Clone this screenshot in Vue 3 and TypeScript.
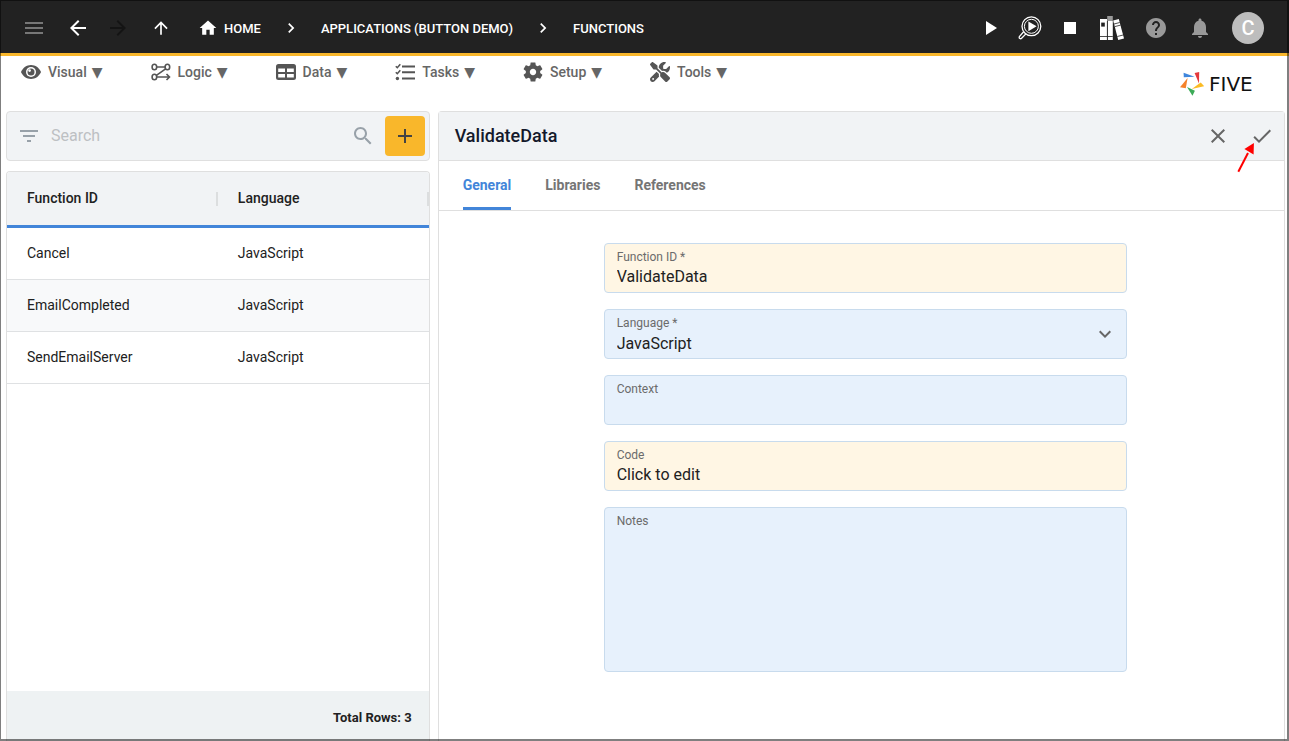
<script setup lang="ts">
import { ref } from 'vue'

interface FunctionRow {
  id: string
  language: string
}

const menus = ['Visual', 'Logic', 'Data', 'Tasks', 'Setup', 'Tools']
const crumbs = ['Home', 'Applications (Button Demo)', 'Functions']
const tabs = ['General', 'Libraries', 'References']

const rows: FunctionRow[] = [
  { id: 'Cancel', language: 'JavaScript' },
  { id: 'EmailCompleted', language: 'JavaScript' },
  { id: 'SendEmailServer', language: 'JavaScript' },
]

const activeTab = ref('General')
const search = ref('')
const functionId = ref('ValidateData')
const language = ref('JavaScript')
const context = ref('')
const code = ref('Click to edit')
const notes = ref('')
</script>

<template>
  <div class="app">
    <header class="topbar">
      <button class="bar-btn menu-btn" aria-label="Menu">
        <svg class="icon" viewBox="0 0 24 24"><path d="M3 18h18v-2H3v2zm0-5h18v-2H3v2zm0-7v2h18V6H3z" /></svg>
      </button>
      <button class="bar-btn" aria-label="Back">
        <svg class="icon" viewBox="0 0 24 24"><path d="M20 11H7.83l5.59-5.59L12 4l-8 8 8 8 1.41-1.41L7.83 13H20v-2z" /></svg>
      </button>
      <button class="bar-btn forward-btn" aria-label="Forward" disabled>
        <svg class="icon" viewBox="0 0 24 24"><path d="M12 4l-1.41 1.41L16.17 11H4v2h12.17l-5.58 5.59L12 20l8-8z" /></svg>
      </button>
      <button class="bar-btn up-btn" aria-label="Up">
        <svg class="icon small" viewBox="0 0 24 24"><path d="M4 12l1.41 1.41L11 7.83V20h2V7.83l5.58 5.59L20 12l-8-8-8 8z" /></svg>
      </button>
      <nav class="crumbs" aria-label="Breadcrumb">
        <template v-for="(crumb, i) in crumbs" :key="crumb">
          <svg v-if="i > 0" class="icon small crumb-sep" viewBox="0 0 24 24"><path d="M10 6L8.59 7.41 13.17 12l-4.58 4.59L10 18l6-6z" /></svg>
          <a href="#" class="crumb">
            <svg v-if="i === 0" class="icon small" viewBox="0 0 24 24"><path d="M10 20v-6h4v6h5v-8h3L12 3 2 12h3v8z" /></svg>
            <span class="crumb-text">{{ crumb }}</span>
          </a>
        </template>
      </nav>
      <div class="actions">
        <button class="bar-btn" aria-label="Run">
          <svg class="icon" viewBox="0 0 24 24"><path d="M8 5v14l11-7z" /></svg>
        </button>
        <button class="bar-btn" aria-label="Inspect">
          <svg class="icon" viewBox="0 0 24 24">
            <g fill="none" stroke="#fff">
              <circle cx="13.4" cy="10.3" r="9.4" stroke-width="1.3" />
              <circle cx="13.4" cy="10.3" r="7" stroke-width="1" />
              <path d="M5.6 15.8L1.4 20.6q-.6 1.4.4 1.9 1 .6 1.8-.2l4.3-4.4" stroke-width="1.3" />
            </g>
            <path d="M10.4 5.4v9.8l8.2-4.9z" />
          </svg>
        </button>
        <button class="bar-btn" aria-label="Stop">
          <svg class="icon" viewBox="0 0 24 24"><path d="M6 6h12v12H6z" /></svg>
        </button>
        <button class="bar-btn wide" aria-label="Library">
          <svg class="icon" viewBox="0 0 24 24">
            <path d="M0 3h7v21H0z" />
            <path d="M1.2 6.6h3.6v4H1.2z" fill="#222" />
            <path d="M7.6 5h5.2v19H7.6z" />
            <path d="M7.2 0h5.6v5H7.2z" fill="#999" />
            <path d="M13.2 4.6l5.6-1.5L24 22.4 18.2 24z" />
            <path d="M0 20.5h12.8M7.4 5v19M14 8l5.8-1.5M14.8 10.6l5.8-1.5M17.3 20.5l5.8-1.5" stroke="#222" stroke-width=".8" fill="none" />
          </svg>
        </button>
        <button class="bar-btn wide muted" aria-label="Help">
          <svg class="icon" viewBox="0 0 24 24"><path d="M12 2C6.48 2 2 6.48 2 12s4.48 10 10 10 10-4.48 10-10S17.52 2 12 2zm1 17h-2v-2h2v2zm2.07-7.75l-.9.92C13.45 12.9 13 13.5 13 15h-2v-.5c0-1.1.45-2.1 1.17-2.83l1.24-1.26c.37-.36.59-.86.59-1.41 0-1.1-.9-2-2-2s-2 .9-2 2H8c0-2.21 1.79-4 4-4s4 1.79 4 4c0 .88-.36 1.68-.93 2.25z" /></svg>
        </button>
        <button class="bar-btn wide muted" aria-label="Notifications">
          <svg class="icon" viewBox="0 0 24 24"><path d="M12 22c1.1 0 2-.9 2-2h-4c0 1.1.89 2 2 2zm6-6v-5c0-3.07-1.64-5.64-4.5-6.32V4c0-.83-.67-1.5-1.5-1.5s-1.5.67-1.5 1.5v.68C7.63 5.36 6 7.92 6 11v5l-2 2v1h16v-1l-2-2z" /></svg>
        </button>
        <button class="avatar">C</button>
      </div>
    </header>

    <div class="menubar">
      <nav class="menus" aria-label="Main">
        <button v-for="menu in menus" :key="menu" class="menu">
          <svg v-if="menu === 'Visual'" class="menu-icon" viewBox="0 0 20 20">
            <path d="M10 3C5.6 3 2 5.800.2 9.500a1.200 1.200 0 0 0 0 1C2 14.200 5.600 17 10 17s8-2.800 9.800-6.500a1.200 1.200 0 0 0 0-1C18 5.800 14.400 3 10 3z" />
            <circle cx="10" cy="10" r="5" fill="#fff" />
            <circle cx="10" cy="10" r="3.500" />
            <circle cx="8.600" cy="8.600" r="1.300" fill="#fff" />
          </svg>
          <svg v-else-if="menu === 'Logic'" class="menu-icon" viewBox="0 0 20 20">
            <g fill="none" stroke="#555" stroke-width="1.600">
              <ellipse cx="3.400" cy="5" rx="2.300" ry="2.700" />
              <ellipse cx="16.400" cy="5" rx="2.300" ry="2.700" />
              <ellipse cx="3.400" cy="15" rx="2.300" ry="2.700" />
              <path d="M5.700 5h8.400M14.600 6.800L5.400 13.400M5.700 15h12.600M15.500 12l3 3-3 3" />
            </g>
          </svg>
          <svg v-else-if="menu === 'Data'" class="menu-icon" viewBox="0 0 20 20">
            <path fill-rule="evenodd" d="M2.500 2h15A2.500 2.500 0 0 1 20 4.500v11a2.500 2.500 0 0 1-2.500 2.500h-15A2.500 2.500 0 0 1 0 15.500v-11A2.500 2.500 0 0 1 2.500 2zM2.200 6.500v3.600H9V6.500zM11 6.500v3.600h6.800V6.500zM2.200 12v3.600H9V12zM11 12v3.600h6.800V12z" />
          </svg>
          <svg v-else-if="menu === 'Tasks'" class="menu-icon" viewBox="0 0 20 20">
            <path d="M7 3.500h13v2H7zM7 9.200h13v2H7zM7 15.500h13v2H7z" />
            <circle cx="2.400" cy="16.500" r="1.700" />
            <path d="M.8 4.200l1.500 1.500 3-3.400M.8 10.200l1.500 1.500 3-3.400" fill="none" stroke="#555" stroke-width="1.600" />
          </svg>
          <svg v-else-if="menu === 'Setup'" class="menu-icon" viewBox="2 2 20 20">
            <path d="M19.140 12.940c.04-.3.060-.61.060-.94 0-.32-.02-.64-.07-.94l2.030-1.580c.18-.14.23-.41.120-.61l-1.920-3.320c-.12-.22-.37-.29-.59-.22l-2.390.960c-.5-.38-1.030-.7-1.620-.94l-.36-2.540c-.04-.24-.24-.41-.48-.41h-3.840c-.24 0-.43.170-.47.410l-.36 2.540c-.59.240-1.130.570-1.620.940l-2.390-.96c-.22-.08-.47 0-.59.220L2.740 8.870c-.12.210-.08.470.120.610l2.030 1.580c-.05.300-.09.630-.09.940s.02.640.070.940l-2.030 1.580c-.18.140-.23.410-.12.610l1.920 3.320c.12.220.37.290.59.220l2.390-.96c.5.380 1.030.7 1.620.940l.36 2.540c.05.240.24.410.48.410h3.840c.24 0 .44-.17.470-.41l.36-2.540c.59-.24 1.130-.56 1.620-.94l2.390.960c.22.080.47 0 .59-.22l1.920-3.320c.12-.22.070-.47-.12-.61l-2.010-1.580zM12 15.200c-1.760 0-3.200-1.440-3.200-3.200s1.440-3.200 3.200-3.200 3.200 1.440 3.200 3.200-1.440 3.200-3.200 3.200z" />
          </svg>
          <svg v-else class="menu-icon" viewBox="0 0 512 512">
            <path d="M78.600 5C69.100-2.400 55.600-1.500 47 7L7 47c-8.500 8.500-9.400 22-2.100 31.600l80 104c4.500 5.900 11.600 9.400 19 9.400h54.100l109 109c-14.700 29-10 65.400 14.300 89.600l112 112c12.500 12.500 32.800 12.500 45.300 0l64-64c12.500-12.500 12.500-32.800 0-45.300l-112-112c-24.200-24.200-60.600-29-89.600-14.300l-109-109V104c0-7.500-3.500-14.500-9.400-19L78.600 5zM19.900 396.100C7.200 408.800 0 426.100 0 444.100C0 481.600 30.400 512 67.900 512c18 0 35.300-7.200 48-19.900L233.700 374.300c-7.800-20.900-9-43.600-3.600-65.100l-61.700-61.700L19.900 396.100zM512 144c0-10.500-1.100-20.700-3.200-30.500c-2.400-11.200-16.100-14.100-24.200-6l-63.900 63.900c-3 3-7.100 4.700-11.300 4.700H352c-8.800 0-16-7.200-16-16V102.600c0-4.200 1.700-8.300 4.700-11.300l63.900-63.900c8.100-8.100 5.200-21.800-6-24.200C388.700 1.100 378.500 0 368 0C288.500 0 224 64.500 224 144l0 .8 85.300 85.300c36-9.100 75.800 .5 104 28.700L429 274.500c49-23 83-72.800 83-130.500zM56 432a24 24 0 1 1 48 0 24 24 0 1 1 -48 0z" />
          </svg>
          <span>{{ menu }}</span>
          <span class="caret" aria-hidden="true">▼</span>
        </button>
      </nav>
      <div class="logo">
        <svg class="logo-mark" viewBox="0 0 24 24">
          <path d="M3.600.8L14.600 4.800 3.800 5.200z" fill="#3f86dc" />
          <path d="M14.600 1L19.200 0l-.2 11.600z" fill="#e4393c" />
          <path d="M7.600 6L5.800 16.200 0 15.200z" fill="#f5822a" />
          <path d="M7 15.100l7.900 3.700L12.500 23.800z" fill="#3cab57" />
          <path d="M11.800 16.900l8.900-6.500 3.500 3.700z" fill="#fbbb24" />
        </svg>
        <span class="logo-name">FIVE</span>
      </div>
    </div>

    <main class="content">
      <section class="list">
        <div class="search">
          <svg class="icon" viewBox="0 0 24 24"><path d="M10 18h4v-2h-4v2zM3 6v2h18V6H3zm3 7h12v-2H6v2z" /></svg>
          <input v-model="search" type="search" placeholder="Search" aria-label="Search" />
          <svg class="icon" viewBox="0 0 24 24"><path d="M15.500 14h-.79l-.28-.27C15.410 12.590 16 11.110 16 9.500 16 5.910 13.090 3 9.500 3S3 5.910 3 9.500 5.910 16 9.500 16c1.610 0 3.090-.59 4.230-1.570l.27.280v.79l5 4.990L20.490 19l-4.990-5zm-6 0C7.010 14 5 11.990 5 9.500S7.010 5 9.500 5 14 7.010 14 9.500 11.990 14 9.500 14z" /></svg>
          <button class="add" aria-label="Add function">
            <svg class="icon" viewBox="0 0 24 24"><path d="M19 13h-6v6h-2v-6H5v-2h6V5h2v6h6v2z" /></svg>
          </button>
        </div>
        <div class="grid">
          <table>
            <thead>
              <tr>
                <th scope="col">Function ID</th>
                <th scope="col">Language</th>
              </tr>
            </thead>
            <tbody>
              <tr v-for="row in rows" :key="row.id">
                <td>{{ row.id }}</td>
                <td>{{ row.language }}</td>
              </tr>
            </tbody>
          </table>
          <footer class="total">Total Rows: {{ rows.length }}</footer>
        </div>
      </section>

      <section class="detail">
        <header class="detail-head">
          <h1>ValidateData</h1>
          <button class="head-btn" aria-label="Close">
            <svg class="icon" viewBox="0 0 24 24"><path d="M19 6.410L17.590 5 12 10.590 6.410 5 5 6.410 10.590 12 5 17.590 6.410 19 12 13.410 17.590 19 19 17.590 13.410 12z" /></svg>
          </button>
          <button class="head-btn" aria-label="Save">
            <svg class="icon" viewBox="0 0 24 24"><path d="M9 16.170L4.830 12l-1.420 1.410L9 19 21 7l-1.410-1.410z" /></svg>
            <svg class="pointer" viewBox="0 0 20 32">
              <path d="M2.300 29.700L12 11" stroke="#f00" stroke-width="2" fill="none" />
              <path d="M17.900 1L8.400 7l9.200 5.400z" fill="#f00" />
            </svg>
          </button>
        </header>
        <div class="tabs" role="tablist">
          <button
            v-for="tab in tabs"
            :key="tab"
            class="tab"
            role="tab"
            :class="{ active: tab === activeTab }"
            :aria-selected="tab === activeTab"
            @click="activeTab = tab"
          >
            {{ tab }}
          </button>
        </div>
        <form class="form" @submit.prevent>
          <div class="fields">
            <div class="field filled">
              <label for="function-id">Function ID *</label>
              <input id="function-id" v-model="functionId" type="text" />
            </div>
            <div class="field">
              <label for="language">Language *</label>
              <select id="language" v-model="language">
                <option>JavaScript</option>
              </select>
              <svg class="icon select-arrow" viewBox="0 0 24 24"><path d="M16.590 8.590L12 13.170 7.410 8.590 6 10l6 6 6-6z" /></svg>
            </div>
            <div class="field">
              <label for="context">Context</label>
              <input id="context" v-model="context" type="text" />
            </div>
            <div class="field filled">
              <label for="code">Code</label>
              <input id="code" v-model="code" type="text" readonly />
            </div>
            <div class="field">
              <label for="notes">Notes</label>
              <textarea id="notes" v-model="notes"></textarea>
            </div>
          </div>
        </form>
      </section>
    </main>
  </div>
</template>

<style>
body {
  margin: 0;
  background: #fff;
}
</style>

<style scoped>
.app {
  position: relative;
  display: flex;
  flex-direction: column;
  height: 100vh;
  overflow: hidden;
  font-family: Roboto, "Liberation Sans", sans-serif;
  font-size: 14px;
  line-height: 20px;
  color: #212121;
}
.app::after {
  content: "";
  position: absolute;
  inset: 0;
  border: solid rgba(0, 0, 0, 0.5);
  border-width: 1px 2px 2px 1px;
  pointer-events: none;
}
.app *,
.app::after {
  box-sizing: border-box;
}
button,
input,
select,
textarea {
  margin: 0;
  padding: 0;
  border: 0;
  background: none;
  font: inherit;
  color: inherit;
  outline: none;
}
button {
  cursor: pointer;
}
.icon {
  display: block;
  flex: none;
  width: 24px;
  height: 24px;
  fill: currentColor;
}
.icon.small {
  width: 20px;
  height: 20px;
}

.topbar {
  display: flex;
  align-items: center;
  flex: none;
  height: 56px;
  padding: 3px 25px 0 14px;
  border-bottom: 3px solid #f9b72b;
  background: #222;
  color: #fff;
}
.bar-btn {
  display: flex;
  align-items: center;
  justify-content: center;
  width: 40px;
  height: 40px;
}
.bar-btn.wide {
  width: 44px;
}
.menu-btn {
  margin-right: 4px;
  color: #777;
}
.forward-btn {
  color: #141414;
}
.up-btn {
  margin-left: 3px;
}
.muted {
  color: #999;
}
.crumbs {
  display: flex;
  align-items: center;
  margin-left: 17px;
  font-size: 13px;
  font-weight: 500;
}
.crumb {
  display: flex;
  align-items: center;
  gap: 6px;
  color: #fff;
  text-decoration: none;
  text-transform: uppercase;
  white-space: nowrap;
}
.crumb-text {
  padding-top: 2px;
}
.crumb-sep {
  margin: 0 20px;
}
.actions {
  display: flex;
  align-items: center;
  margin-left: auto;
}
.avatar {
  width: 32px;
  height: 32px;
  margin-left: 10px;
  border-radius: 50%;
  background: #bdbdbd;
  color: #fff;
  font-size: 20px;
  font-weight: 500;
}

.menubar {
  display: flex;
  justify-content: space-between;
  flex: none;
  height: 55px;
  padding: 6px 21px 0;
}
.menus {
  display: flex;
  align-items: flex-start;
  gap: 48px;
}
.menu {
  display: flex;
  align-items: center;
  color: #666;
  font-weight: 500;
}
.menu-icon {
  width: 20px;
  height: 20px;
  margin-right: 7px;
  fill: #555;
}
.caret {
  margin-left: 5px;
  font-family: "DejaVu Sans", sans-serif;
}
.logo {
  display: flex;
  align-items: center;
  gap: 5px;
  width: 88px;
  height: 44px;
}
.logo-mark {
  width: 24px;
  height: 24px;
}
.logo-name {
  font-family: "DejaVu Sans", sans-serif;
  font-size: 20px;
  color: #111;
}

.content {
  display: grid;
  grid-template-columns: 1fr 2fr;
  gap: 8px;
  flex: 1;
  min-height: 0;
  padding: 0 4px 0 6px;
}
.list {
  display: flex;
  flex-direction: column;
  gap: 10px;
  min-width: 0;
}
.search {
  display: flex;
  align-items: center;
  height: 50px;
  padding: 0 4px 0 10px;
  border: 1px solid #dfdfdf;
  border-radius: 4px;
  background: #f1f3f5;
  color: #98a1a9;
}
.search input {
  flex: 1;
  min-width: 0;
  margin: 0 10px;
  font-size: 16px;
  color: #212121;
  appearance: none;
}
.search input::placeholder {
  color: #bdc0c3;
  opacity: 1;
}
.add {
  display: flex;
  align-items: center;
  justify-content: center;
  width: 40px;
  height: 40px;
  margin-left: 10px;
  border-radius: 4px;
  background: #f9b72b;
  color: #444;
}
.grid {
  display: flex;
  flex-direction: column;
  flex: 1;
  overflow: hidden;
  border: 1px solid #dfdfdf;
  border-bottom: 0;
  border-radius: 4px 4px 0 0;
}
table {
  width: 100%;
  table-layout: fixed;
  border-collapse: separate;
  border-spacing: 0;
}
th {
  position: relative;
  height: 56px;
  padding: 0 20px 2px;
  border-bottom: 3px solid #4285d9;
  background: #f1f3f5;
  font-weight: 500;
  text-align: left;
}
th::after {
  content: "";
  position: absolute;
  top: 20px;
  right: 0;
  width: 2px;
  height: 14px;
  background: #dcdedf;
}
td {
  height: 52px;
  padding: 0 20px 2px;
  border-bottom: 1px solid #dfe1e3;
}
tbody tr:nth-child(even) {
  background: #f8f9fa;
}
.total {
  margin-top: auto;
  padding: 17px 17px 13px;
  background: #eef2f3;
  font-size: 13px;
  font-weight: 700;
  text-align: right;
}

.detail {
  display: flex;
  flex-direction: column;
  min-width: 0;
  border: 1px solid #dfdfdf;
  border-bottom: 0;
  border-radius: 4px 4px 0 0;
}
.detail-head {
  display: flex;
  align-items: center;
  height: 49px;
  padding-left: 16px;
  border-bottom: 1px solid #dfdfdf;
  background: #f1f3f5;
}
h1 {
  flex: 1;
  margin: 0;
  font-size: 18px;
  font-weight: 500;
  color: #14192b;
}
.head-btn {
  position: relative;
  display: flex;
  align-items: center;
  justify-content: center;
  width: 44px;
  height: 44px;
  color: #666;
}
.pointer {
  position: absolute;
  top: 28px;
  left: -4px;
  width: 20px;
  height: 32px;
}
.tabs {
  display: flex;
  gap: 34px;
  height: 50px;
  padding: 0 24px;
  border-bottom: 1px solid #dfdfdf;
}
.tab {
  border-top: 1px solid transparent;
  border-bottom: 3px solid transparent;
  font-weight: 700;
  color: #757575;
}
.tab.active {
  border-bottom-color: #4285d9;
  color: #4285d9;
}
.form {
  padding: 32px 0 0 8px;
}
.fields {
  display: flex;
  flex-direction: column;
  gap: 16px;
  width: 62.5%;
  margin: 0 auto;
}
.field {
  position: relative;
  display: flex;
  flex-direction: column;
  padding: 5px 12px 4px;
  border: 1px solid #c8dbed;
  border-radius: 4px;
  background: #e7f1fc;
}
.field.filled {
  background: #fff6e4;
}
.field label {
  font-size: 12px;
  line-height: 16px;
  color: #6b6b6b;
}
.field input,
.field select {
  width: 100%;
  height: 23px;
  font-size: 16px;
  line-height: 23px;
  appearance: none;
}
.field select {
  padding-top: 1px;
}
.field textarea {
  height: 138px;
  font-size: 16px;
  resize: none;
}
.select-arrow {
  position: absolute;
  top: 12px;
  right: 9px;
  color: #666;
  pointer-events: none;
}
</style>
